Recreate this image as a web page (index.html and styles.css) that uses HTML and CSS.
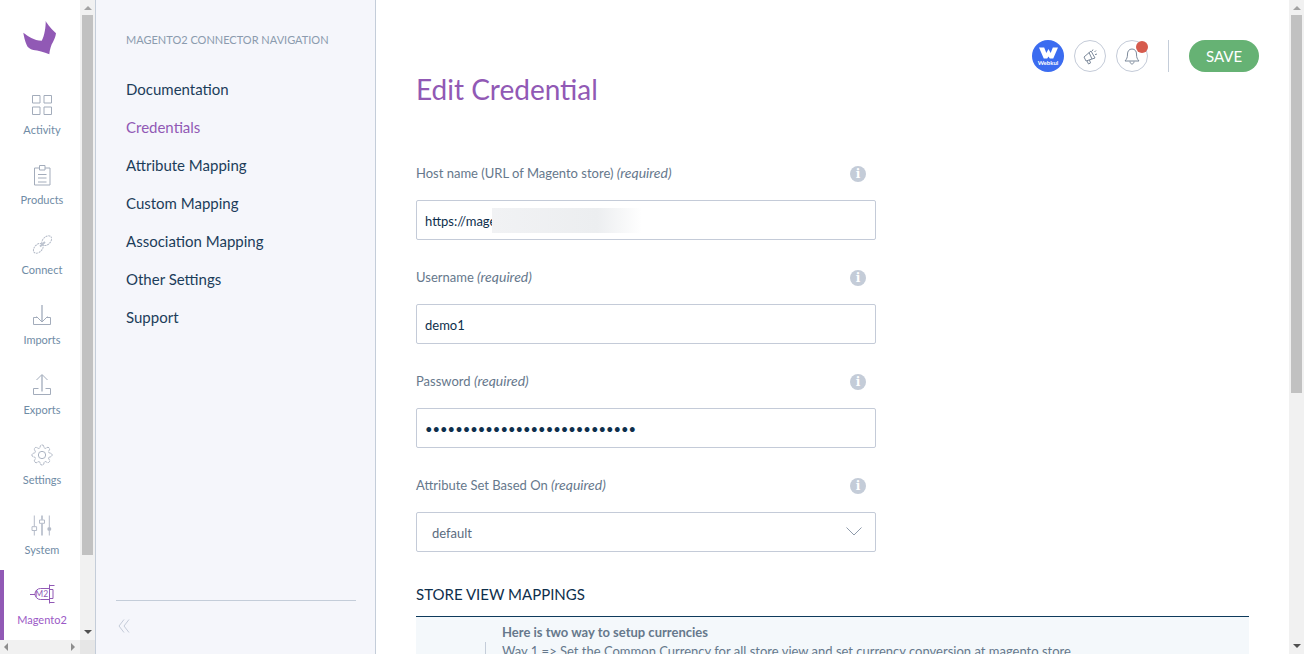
FILE: index.html
```html
<!DOCTYPE html>
<html lang="en">
<head>
<meta charset="utf-8">
<title>Edit Credential</title>
<link rel="stylesheet" href="styles.css">
</head>
<body>
<div class="app">
  <div class="rail-pane">
    <div class="rail-top">
      <nav class="rail">
        <div class="logo">
          <svg width="36" height="36" viewBox="0 0 36 36"><path fill="#9159b5" d="M23.700 1C25.500 4.500 30 9.500 34 13.300 33.500 17 32 20 31 22 29 25 27.700 30 27.300 34.300 22 32 16 30.500 11.300 30 8 29 5.500 27.500 4.700 25 3 21 1.800 16 1.300 12.700 6 16 12 20.700 19.700 20.700 22.500 16 23.800 7 23.700 1Z"/></svg>
        </div>
        <a class="rail-item">
          <svg class="ri" viewBox="0 0 22 22"><path d="M1.500 1.500H9V9H1.500zM13 1.500h7.500V9H13zM1.500 13H9v7.500H1.500zM13 13h7.500v7.500H13z"/></svg>
          <span>Activity</span>
        </a>
        <a class="rail-item">
          <svg class="ri" viewBox="0 0 22 22"><path d="M8.500 4h-5v17H19V4h-5M8.500 1.500H14V6H8.500zM7 10.500h8.500M7 14h8.500M7 18h8.500"/></svg>
          <span>Products</span>
        </a>
        <a class="rail-item">
          <svg class="ri" viewBox="0 0 22 22"><ellipse class="pale" cx="7.300" cy="14.300" rx="5.800" ry="3.800" transform="rotate(-45 7.300 14.300)" stroke-dasharray="2 .7"/><ellipse class="pale" cx="15.700" cy="6.700" rx="5.800" ry="3.800" transform="rotate(-45 15.700 6.700)" stroke-dasharray="2 .7"/><path class="s2" d="M9 12.500l5-4.500"/></svg>
          <span>Connect</span>
        </a>
        <a class="rail-item">
          <svg class="ri" viewBox="0 0 22 22"><path class="s2" d="M11 1v17"/><path d="M5.500 12.500L11 18l5.500-5.500M7 13.500H2.500v7h17v-7H15"/></svg>
          <span>Imports</span>
        </a>
        <a class="rail-item">
          <svg class="ri" viewBox="0 0 22 22"><path class="s2" d="M11 1v16.500"/><path d="M5.500 6L11 .5 16.500 6M7.500 14.500h-5v6h17v-6h-5"/></svg>
          <span>Exports</span>
        </a>
        <a class="rail-item">
          <svg class="ri" viewBox="0 0 24 24"><circle cx="12" cy="12" r="4"/><path stroke-dasharray="3 .6" d="M19.400 15a1.650 1.650 0 0 0 .33 1.820l.06.06a2 2 0 0 1 0 2.830 2 2 0 0 1-2.830 0l-.06-.06a1.650 1.650 0 0 0-1.820-.33 1.650 1.650 0 0 0-1 1.510V21a2 2 0 0 1-2 2 2 2 0 0 1-2-2v-.09A1.650 1.650 0 0 0 9 19.400a1.650 1.650 0 0 0-1.820.33l-.06.06a2 2 0 0 1-2.830 0 2 2 0 0 1 0-2.830l.06-.06a1.650 1.650 0 0 0 .33-1.820 1.650 1.650 0 0 0-1.510-1H3a2 2 0 0 1-2-2 2 2 0 0 1 2-2h.09A1.650 1.650 0 0 0 4.600 9a1.650 1.650 0 0 0-.33-1.820l-.06-.06a2 2 0 0 1 0-2.830 2 2 0 0 1 2.830 0l.06.06a1.650 1.650 0 0 0 1.820.33H9a1.650 1.650 0 0 0 1-1.510V3a2 2 0 0 1 2-2 2 2 0 0 1 2 2v.09a1.650 1.650 0 0 0 1 1.510 1.650 1.650 0 0 0 1.820-.33l.06-.06a2 2 0 0 1 2.830 0 2 2 0 0 1 0 2.830l-.06.06a1.650 1.650 0 0 0-.33 1.820V9a1.650 1.650 0 0 0 1.510 1H21a2 2 0 0 1 2 2 2 2 0 0 1-2 2h-.09a1.650 1.650 0 0 0-1.510 1z"/></svg>
          <span>Settings</span>
        </a>
        <a class="rail-item">
          <svg class="ri" viewBox="0 0 22 22"><path class="pale" d="M3.300 1.500v11M3.300 16.500v5M18.300 1.500V13M18.300 17v4.500M1 12.700h4.600v3.800H1zM8.500 6h5v3.300h-5z"/><path class="s2" d="M11 1.500V6M11 9.300v12.200"/><circle class="filled" cx="18.300" cy="15" r="2"/></svg>
          <span>System</span>
        </a>
        <a class="rail-item active">
          <svg class="ri m2-icon" viewBox="0 1 25 22"><path d="M0 11.500h5M19.500 5.500h-9a5.500 5.500 0 0 0 0 11h9M19.500 1.500v19M19.500 2.500h5M19.500 19.500h5M19.500 6.500h3.500v9h-3.500"/><text x="11.700" y="14" text-anchor="middle" class="m2">M2</text></svg>
          <span>Magento2</span>
        </a>
      </nav>
      <div class="vbar">
        <i class="arrow up light"></i>
        <div class="thumb"></div>
        <i class="arrow down"></i>
      </div>
    </div>
    <div class="hbar">
      <div class="htrack">
        <i class="arrow left"></i>
        <i class="arrow right"></i>
      </div>
      <div class="corner"></div>
    </div>
  </div>

  <aside class="side">
    <div class="side-title">MAGENTO2 CONNECTOR NAVIGATION</div>
    <ul class="side-links">
      <li>Documentation</li>
      <li class="current">Credentials</li>
      <li>Attribute Mapping</li>
      <li>Custom Mapping</li>
      <li>Association Mapping</li>
      <li>Other Settings</li>
      <li>Support</li>
    </ul>
    <div class="side-foot">
      <svg width="14" height="14" viewBox="0 0 14 14" class="collapse"><path d="M7 .500L2 7l5 6.500M12 .500L7 7l5 6.500"/></svg>
    </div>
  </aside>

  <main class="main">
    <header class="top">
      <h1>Edit Credential</h1>
      <div class="tools">
        <div class="wk">
          <svg width="19" height="12" viewBox="0 0 22 13"><path fill="#fff" d="M0 0h6l2.500 6.500L11 2l2.500 4.500L16 0h6l-5.500 13h-4L11 10.500 9.500 13h-4z"/></svg>
          <span>Webkul</span>
        </div>
        <div class="round">
          <svg width="18" height="18" viewBox="0 0 18 18"><path d="M3 10l7-6 4 7-9 3zM8 5.500l3 6.500M6 14l1.500 3 2-1-1-3M12 2.500L11.200 4M15 3.500L13.500 5M16 7l-2 .6"/></svg>
        </div>
        <div class="round">
          <svg width="18" height="18" viewBox="0 0 18 18"><path d="M9 2c-3 0-4.500 2.300-4.500 5 0 3.500-.7 5-2.500 7h14c-1.800-2-2.500-3.500-2.500-7 0-2.700-1.500-5-4.500-5zM7 14.500c0 1.500 1 2.500 2 2.500s2-1 2-2.500"/></svg>
          <b class="dot"></b>
        </div>
        <div class="vr"></div>
        <button class="save" type="button">SAVE</button>
      </div>
    </header>

    <form class="form">
      <div class="field">
        <div class="label-row"><label>Host name (URL of Magento store) <em>(required)</em></label><span class="info">i</span></div>
        <div class="input host">https://mage<div class="blur"></div></div>
      </div>
      <div class="field">
        <div class="label-row"><label>Username <em>(required)</em></label><span class="info">i</span></div>
        <div class="input">demo1</div>
      </div>
      <div class="field">
        <div class="label-row"><label>Password <em>(required)</em></label><span class="info">i</span></div>
        <div class="input dots">••••••••••••••••••••••••••••</div>
      </div>
      <div class="field">
        <div class="label-row"><label>Attribute Set Based On <em>(required)</em></label><span class="info">i</span></div>
        <div class="input select">default
          <svg width="16" height="9" viewBox="0 0 16 9"><path d="M.5.500L8 8 15.500.5"/></svg>
        </div>
      </div>
    </form>

    <h2>STORE VIEW MAPPINGS</h2>
    <div class="notice">
      <div class="notice-rule"></div>
      <div class="notice-text">
        <strong>Here is two way to setup currencies</strong>
        <p>Way 1 =&gt; Set the Common Currency for all store view and set currency conversion at magento store</p>
      </div>
    </div>
  </main>

  <div class="vbar page-vbar">
    <i class="arrow up light"></i>
    <div class="thumb thumb-page"></div>
    <i class="arrow down"></i>
  </div>
</div>
</body>
</html>
```
FILE: styles.css
```css
* { box-sizing: border-box; }
html, body { margin: 0; height: 100%; overflow: hidden; }
body { font-family: Lato, "Open Sans", sans-serif; color: #0e2f4c; background: #fff; }
.app { display: flex; height: 654px; }

.rail-pane { width: 96px; flex: none; display: flex; flex-direction: column; border-right: 1px solid #c4cdd9; }
.rail-top { flex: 1; display: flex; min-height: 0; }
.rail { width: 80px; flex: none; }
.logo { height: 80px; display: flex; justify-content: center; padding-top: 20px; }
.rail-item { height: 70px; display: flex; flex-direction: column; align-items: center; padding-top: 14px; border-left: 4px solid transparent; font-size: 11px; line-height: 14px; color: #6f8ba5; }
.ri { width: 22px; height: 22px; margin-bottom: 7px; fill: none; stroke: #a3acbb; stroke-width: 1; flex: none; }
.ri .s2 { stroke: #bcc3cf; stroke-width: 1.8; }
.ri .pale { stroke: #b4bbc8; }
.filled { fill: #b4bbc8; stroke: none; }
.rail-item.active { color: #9b59c6; border-left-color: #9159b5; }
.active .ri { stroke: #9159b5; }
.ri.m2-icon { width: 25px; }
.m2 { font: 400 8.5px Lato, sans-serif; fill: #9159b5; stroke: none; }

.vbar { width: 15px; flex: none; background: #f1f1f1; display: flex; flex-direction: column; align-items: center; padding: 0 2px; }
.arrow { display: block; width: 0; height: 0; border: 4px solid transparent; flex: none; }
.arrow.up { border-top: 0; border-bottom: 4px solid #505050; margin: 6px 0 5px; }
.arrow.up.light { border-bottom-color: #a3a3a3; }
.arrow.down { border-bottom: 0; border-top: 4px solid #505050; margin-top: auto; margin-bottom: 6px; }
.thumb { width: 100%; height: 540px; background: #c1c1c1; flex: none; }
.thumb-page { height: 378px; }

.hbar { height: 14px; flex: none; display: flex; }
.htrack { flex: 1; background: #f1f1f1; display: flex; justify-content: space-between; align-items: center; padding: 0 5px 0 4px; }
.corner { width: 15px; background: #e6e6e6; flex: none; }
.arrow.left { border-left: 0; border-right: 4px solid #8e8e8e; }
.arrow.right { border-right: 0; border-left: 4px solid #8e8e8e; }

.side { width: 280px; flex: none; background: #f5f6fb; border-right: 1px solid #c4cdd9; padding: 33px 19px 0 20px; display: flex; flex-direction: column; }
.side-title { padding-left: 10px; font-size: 11px; line-height: 13px; color: #8b9bae; }
.side-links { list-style: none; margin: 24px 0 0; padding: 0 0 0 10px; flex: 1; }
.side-links li { height: 38px; line-height: 38px; font-size: 15px; color: #1c3d5a; }
.side-links li.current { color: #9159b5; }
.side-foot { border-top: 1px solid #c4cdd9; height: 54px; padding: 18px 0 0 1px; }
.collapse { fill: none; stroke: #c4cbd8; stroke-width: 1; display: block; }

.main { flex: 1; min-width: 0; padding: 40px 40px 0 40px; overflow: hidden; }
.top { display: flex; justify-content: space-between; height: 96px; }
h1 { margin: 31px 0 0; font-size: 28px; line-height: 36px; font-weight: 400; color: #9159b5; }
.tools { display: flex; align-items: flex-start; gap: 10px; margin-right: -10px; }
.wk { width: 32px; height: 32px; border-radius: 50%; background: #3b6cf0; display: flex; flex-direction: column; align-items: center; padding-top: 7px; color: #fff; }
.wk svg { flex: none; }
.wk span { font-size: 6px; line-height: 8px; font-weight: 700; }
.round { width: 32px; height: 32px; border-radius: 50%; border: 1px solid #c4cbd8; position: relative; display: flex; align-items: center; justify-content: center; }
.round svg { fill: none; stroke: #7d8a9b; stroke-width: 1; }
.dot { position: absolute; top: 0; right: -1px; width: 12px; height: 12px; border-radius: 50%; background: #d65b4d; }
.vr { width: 1px; height: 32px; background: #c4cdd9; margin: 0 10px; }
.save { width: 70px; height: 32px; border: 0; border-radius: 16px; background: #66b274; color: #fff; font: 400 15px Lato, sans-serif; padding: 0; }

.form { width: 460px; }
.field { height: 104px; padding-top: 28px; }
.label-row { display: flex; justify-content: space-between; align-items: center; height: 18px; padding-right: 10px; margin-bottom: 18px; }
label { font-size: 13px; color: #66788c; margin-top: -2px; }
em { font-style: italic; font-size: 14px; }
.info { width: 16px; height: 16px; margin-top: 2px; border-radius: 50%; background: #c4ccd8; color: #fff; font: 700 12px/16px "DejaVu Serif", serif; text-align: center; }
.input { height: 40px; border: 1px solid #c4cbd8; border-radius: 2px; padding-left: 8px; font-size: 13px; line-height: 40px; color: #0e2f4c; position: relative; }
.blur { position: absolute; left: 75px; top: 7px; width: 150px; height: 25px; background: linear-gradient(90deg, #f1f2f4, #eceef0 70%, #fff); }
.select { padding: 2px 13px 0 15px; color: #5b6c80; display: flex; justify-content: space-between; align-items: center; }
.select svg { fill: none; stroke: #8f9bab; stroke-width: 1; margin-top: -3px; }

h2 { margin: 30px 0 0; height: 34px; font-size: 15px; line-height: 24px; font-weight: 400; color: #0e2f4c; }
.notice { height: 60px; border-top: 1px solid #0e3a5c; background: #f4f8fb; display: flex; padding-left: 69px; font-size: 13px; line-height: 19px; color: #66788c; }
.notice-rule { width: 1px; height: 20px; background: #c4cdd9; margin-top: 25px; flex: none; }
.notice-text { padding: 6px 0 0 16px; }
.notice-text strong { font-weight: 700; display: block; }
.notice-text p { margin: 0; }
```
